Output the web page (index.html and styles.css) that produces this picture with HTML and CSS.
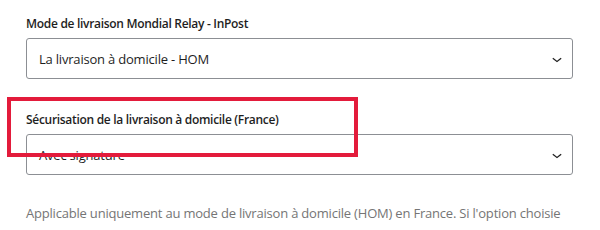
FILE: index.html
```html
<!DOCTYPE html>
<html lang="fr">
  <head>
    <meta charset="utf-8" />
    <meta name="viewport" content="width=device-width, initial-scale=1.0" />
    <link rel="stylesheet" href="styles.css">
  </head>
  <body>
    <main class="settings">
      <div class="field">
        <label class="field-label">Mode de livraison Mondial Relay - InPost</label>
        <div class="select">
          <span>La livraison à domicile - HOM</span>
          <svg class="chevron" viewBox="0 0 24 24" width="20" height="20" aria-hidden="true">
            <path d="M17.5 11.6 12 16l-5.5-4.4.9-1.2L12 14l4.5-3.6 1 1.2z" />
          </svg>
        </div>
      </div>

      <div class="field">
        <label class="field-label">Sécurisation de la livraison à domicile (France)</label>
        <div class="select">
          <span>Avec signature</span>
          <svg class="chevron" viewBox="0 0 24 24" width="20" height="20" aria-hidden="true">
            <path d="M17.5 11.6 12 16l-5.5-4.4.9-1.2L12 14l4.5-3.6 1 1.2z" />
          </svg>
        </div>
        <!-- annotation drawn over the screenshot -->
        <div class="highlight"></div>
      </div>

      <p class="help">
        Applicable uniquement au mode de livraison à domicile (HOM) en France. Si l'option choisie
        n'est pas prévue dans votre contrat Mondial Relay, la création de l'étiquette échouera. Si vous
        avez un doute, contactez votre interlocuteur commercial.
      </p>
    </main>
  </body>
</html>
```

FILE: styles.css
```css
:root {
  --text: #1e1e1e;
  --text-muted: #757575;
  --border: #8c8f94;
  --annotation: #e31b3b;
}

* {
  box-sizing: border-box;
  margin: 0;
  padding: 0;
}

body {
  background: #fff;
  color: var(--text);
  font-family: "Open Sans", "Noto Sans", sans-serif;
}

.settings {
  padding: 15px 27px 0 26px;
}

.field {
  position: relative;
  margin-bottom: 32px;
}

.field-label {
  display: block;
  font-size: 12px;
  font-weight: 600;
  letter-spacing: -0.3px;
  line-height: 18px;
  margin-bottom: 5px;
}

.select {
  display: flex;
  align-items: center;
  justify-content: space-between;
  height: 41px;
  padding: 0 5px 0 12px;
  border: 1px solid var(--border);
  border-radius: 3px;
  font-size: 13px;
  letter-spacing: -0.2px;
}

.chevron {
  fill: var(--text);
}

.highlight {
  position: absolute;
  left: -19px;
  top: -14px;
  width: 351px;
  height: 60px;
  border: 4px solid var(--annotation);
}

.help {
  margin-top: -6px;
  color: var(--text-muted);
  font-size: 13px;
  letter-spacing: -0.2px;
  line-height: 24px;
}
```
